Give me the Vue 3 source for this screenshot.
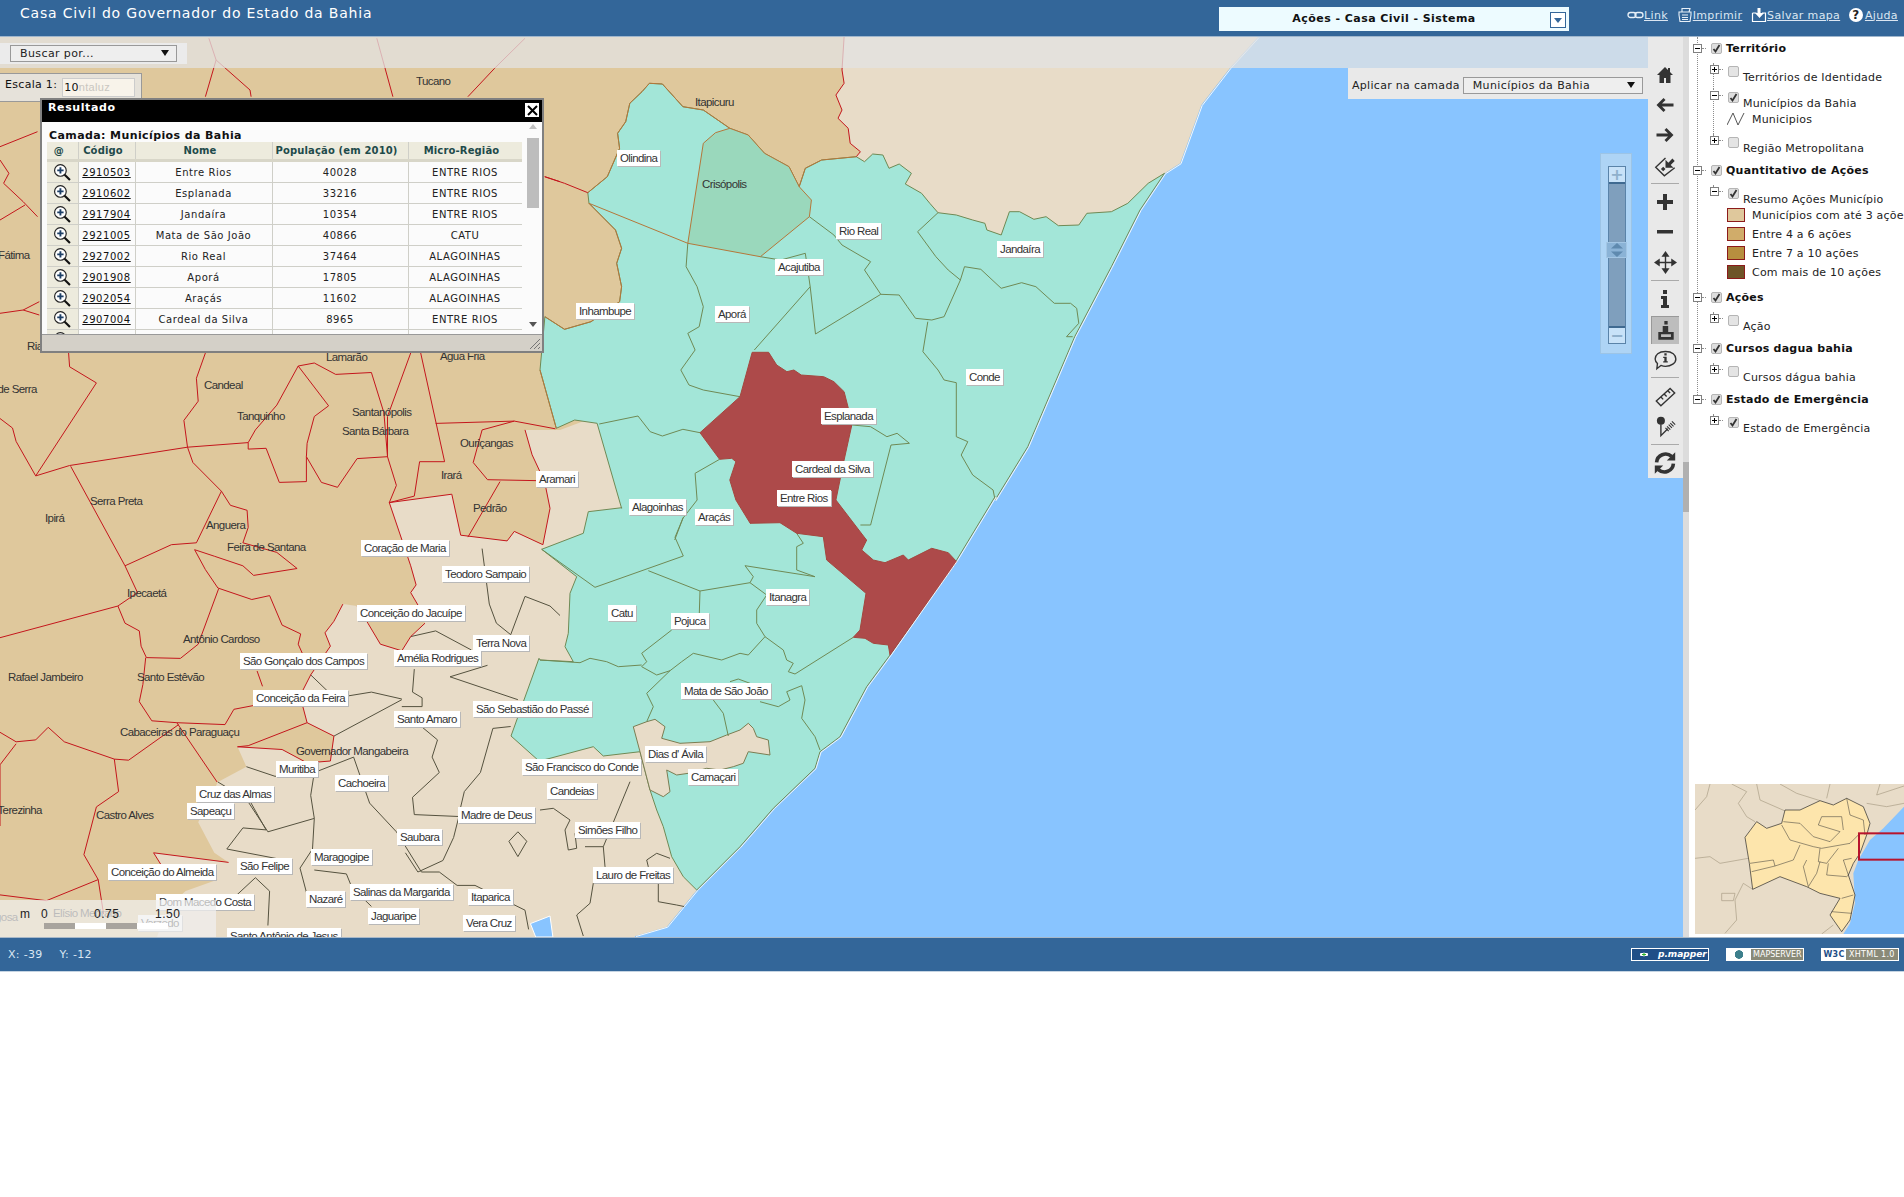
<script setup>
// reference zoom crops -> page coordinates, so the map traces stay readable
const toPts = (args, fx, fy) => {
  let out = ''
  for (let i = 0; i < args.length; i += 2) {
    out += `${fx(args[i]).toFixed(1)},${fy(args[i + 1]).toFixed(1)} `
  }
  return out
}
const z6 = (...a) => toPts(a, (x) => 540 + x / 2.45, (y) => 60 + y / 3)
const z7 = (...a) => toPts(a, (x) => 540 + x / 3, (y) => 480 + y / 3)
const z8 = (...a) => toPts(a, (x) => x / 2.8, (y) => 340 + y / 2.613)
const z1 = (...a) => toPts(a, (x) => x / 2.8, (y) => y / 3)

const coastNorth = z6(1759, -69, 1690, 24, 1620, 135, 1568, 310, 1530, 340)
const coastMid = z6(1470, 450, 1400, 620, 1310, 830, 1195, 1160, 1115, 1320)
const coastSouth = z7(1365, 50, 1250, 240, 1050, 525, 980, 620, 900, 770, 840, 815, 825, 865, 700, 985, 600, 1100, 470, 1230)
const coastEnd = z7(380, 1340, 285, 1368)

const land = `0,37 ${coastNorth}${coastMid}${coastSouth}${coastEnd}635,937 0,937`
const coastLine = coastNorth + coastMid + coastSouth + coastEnd

const beigeNorth = z6(745, -69) + coastNorth + z6(
  1490, 370, 1440, 430, 1400, 455, 1340, 460, 1320, 495, 1270, 497, 1240, 470, 1210, 478, 1175, 455, 1150, 455,
  1130, 525, 1095, 510, 1090, 490, 1060, 480, 1020, 465, 975, 458, 955, 430, 935, 400, 895, 372, 910, 340,
  880, 312, 855, 325, 840, 285, 815, 282, 795, 305, 775, 290, 785, 275, 760, 250, 755, 205, 730, 175,
  740, 150, 725, 105, 745, 70, 740, 30,
)

const beigeSouth = z8(1090, 425, 1265, 403, 1290, 510, 1420, 525, 1440, 500, 1520, 535, 1540, 440, 1525, 370, 1490, 300, 1470, 235, 1568, 235)
  + '600,415 640,430 ' + z7(470, 1230, 380, 1340, 285, 1368) + '635,937 157,937 '
  + z8(470, 1480, 520, 1440, 610, 1410, 460, 1385, 430, 1340, 640, 1365, 600, 1340, 555, 1260, 610, 1155, 690, 1115, 665, 1063,
    790, 1070, 860, 1105, 925, 1100, 935, 1035, 860, 1000, 840, 930, 870, 875, 925, 800, 910, 765, 935, 735, 960, 690, 1000, 695,
    1030, 740, 1065, 795, 1125, 812, 1150, 775, 1190, 740, 1175, 700, 1150, 660, 1165, 640, 1150, 590)

const green = z6(
  268, 70, 300, 72, 350, 140, 400, 150, 465, 205, 510, 225, 550, 280, 610, 320, 635, 380, 650, 325, 690, 300, 775, 290,
  795, 305, 815, 282, 840, 285, 855, 325, 880, 312, 910, 340, 895, 372, 935, 400, 955, 430, 975, 458, 1020, 465, 1060, 480,
  1090, 490, 1095, 510, 1130, 525, 1150, 455, 1175, 455, 1210, 478, 1240, 470, 1270, 497, 1320, 495, 1340, 460, 1400, 455,
  1440, 430, 1490, 370, 1530, 340,
) + coastMid + coastSouth + z7(
  430, 1190, 395, 1130, 370, 1040, 350, 990, 330, 930, 300, 815, 190, 828, 160, 800, 30, 835, -3, 843, -87, 768, -3, 535, 0, 540,
  100, 545, 75, 500, 85, 460, 90, 340, 110, 290, 5, 208, 130, 160, 145, 95, 245, 83,
) + z6(
  200, 1345, 140, 1090, 85, 1080, 40, 1105, 0, 930, 12, 770, 60, 808, 125, 785, 195, 725, 200, 680, 188, 610, 200, 565,
  185, 510, 120, 430, 117, 398, 165, 350, 195, 265, 190, 220, 210, 185, 220, 130, 250, 95,
)

const bulge = z7(320, 725, 345, 718, 375, 740, 365, 775, 420, 790, 510, 785, 560, 765, 600, 750, 625, 730, 640, 745, 650, 770,
  685, 780, 690, 825, 625, 815, 610, 850, 580, 860, 540, 870, 500, 865, 445, 880, 410, 885, 380, 870, 390, 935, 370, 950,
  330, 930, 300, 815, 280, 740)

const crisopolis = z6(465, 205, 510, 225, 550, 280, 610, 320, 635, 380, 665, 420, 660, 470, 540, 590, 362, 550, 400, 250, 430, 218)

const selected = z6(520, 877, 560, 877, 580, 915, 605, 935, 622, 930, 640, 945, 695, 950, 720, 965, 745, 995, 765, 1090, 745, 1200, 725, 1320, 800, 1440)
  + z7(980, 180, 965, 210, 1000, 240, 1035, 248, 1090, 225, 1105, 240, 1175, 205, 1225, 218, 1250, 245, 1050, 525, 1045, 495,
    1000, 490, 975, 475, 940, 472, 960, 450, 978, 340, 860, 240, 850, 170, 770, 160, 720, 128, 630, 130)
  + z6(515, 1390, 480, 1320, 465, 1260, 480, 1205, 470, 1195, 440, 1198, 392, 1118, 490, 1010)

const lake = z8(1485, 1525, 1540, 1505, 1548, 1560, 1500, 1560)

const redLines = [
  z6(745, -69, 740, 30, 745, 70, 725, 105, 740, 150, 730, 175, 755, 205, 760, 250, 785, 275, 775, 290),
  z6(12, 350, 60, 370, 117, 398),
  z1(585, 115, 605, 180, 575, 290),
  z1(605, 180, 700, 270, 703, 290),
  z1(1055, 115, 1100, 290),
  z1(1470, 115, 1385, 205, 1310, 290),
  z1(0, 440, 105, 395),
  z1(0, 480, 25, 520, 10, 550, 65, 605, 105, 650),
  z1(0, 660, 70, 615),
  z1(110, 905, 65, 930, 0, 940),
  z1(65, 930, 110, 945),
  z1(1525, 530, 1568, 545),
  z8(192, 34, 195, 70, 270, 112, 100, 355, 45, 265, 35, 230, 0, 205),
  z8(100, 355, 195, 328, 525, 280, 695, 268, 695, 285, 745, 283, 782, 372, 858, 370, 858, 305, 900, 372, 945, 385, 1000, 310, 1085, 305, 1075, 190, 1040, 85, 940, 90, 880, 60, 835, 68, 775, 170, 715, 235, 695, 268),
  z8(835, 68, 920, 172, 880, 200, 860, 270, 858, 305),
  z8(1150, 34, 1085, 200, 1085, 305, 1110, 380, 1090, 425, 1160, 408, 1175, 318, 1245, 318, 1178, 34),
  z8(1220, 218, 1440, 212, 1555, 232),
  z8(1440, 212, 1350, 235, 1325, 320, 1365, 365, 1525, 368),
  z8(1400, 370, 1310, 515),
  z8(1090, 425, 1265, 403, 1290, 510, 1420, 525, 1440, 500, 1520, 535, 1540, 440, 1525, 370, 1490, 300, 1470, 235),
  z8(575, 34, 550, 100, 555, 160, 515, 210, 525, 280, 540, 320, 620, 395, 550, 530, 480, 535, 350, 590, 198, 330),
  z8(620, 395, 645, 432, 692, 445, 695, 490, 680, 530, 775, 555, 832, 597, 710, 615, 680, 590, 600, 565, 545, 548, 575, 600, 610, 648, 705, 678, 755, 668, 790, 745, 842, 768, 835, 795, 848, 822),
  z8(350, 590, 385, 660, 330, 695, 0, 778),
  z8(330, 695, 350, 740, 390, 760, 395, 800, 410, 830, 505, 832, 555, 795, 612, 650),
  z8(408, 830, 400, 900, 390, 945, 425, 995, 495, 1000, 630, 1005, 655, 965, 710, 955),
  z8(495, 1000, 608, 1155),
  z8(720, 865, 735, 905),
  z8(500, 1005, 360, 1098, 320, 1095, 180, 1050, 135, 1012, 100, 1045, 45, 1050, 0, 1025),
  z8(320, 1095, 332, 1180, 270, 1220, 235, 1345, 275, 1410, 130, 1465, 0, 1450),
  z8(45, 1055, 0, 1110, 0, 1270),
  z8(275, 1410, 290, 1500),
  z8(1090, 425, 1150, 590, 1165, 640, 1150, 660, 1175, 700),
  z8(960, 690, 935, 735, 910, 765, 925, 800, 870, 875, 840, 930, 860, 1000, 695, 1060, 665, 1063, 790, 1070, 860, 1105, 925, 1100, 935, 1035, 860, 1000),
  z8(1000, 695, 1030, 740, 1065, 795, 1125, 812, 1150, 775, 1190, 740),
  z8(430, 1340, 640, 1365),
  z8(430, 1340, 460, 1385),
]

const oliveLines = [
  z6(358, 620, 385, 680, 400, 740, 390, 800, 362, 820, 380, 870, 345, 930, 365, 975, 400, 990, 490, 1010),
  z6(362, 550, 358, 620),
  z6(540, 590, 590, 600, 650, 580, 655, 620, 662, 680, 525, 870),
  z6(662, 680, 675, 822, 835, 703, 880, 705, 900, 740, 920, 775, 960, 780, 990, 770, 1030, 660, 1000, 630, 970, 590, 925, 515, 975, 458),
  z6(660, 470, 720, 525, 740, 555, 810, 605, 795, 630, 835, 703),
  z6(1030, 660, 1040, 620, 1080, 628, 1130, 685, 1180, 668, 1215, 680, 1260, 730, 1300, 730, 1315, 745, 1320, 790, 1290, 830, 1305, 830),
  z6(950, 785, 938, 875, 975, 930, 990, 960, 1020, 968, 1020, 1130, 1048, 1145, 1032, 1185, 1060, 1245, 1110, 1290, 1115, 1320),
  z6(392, 1118, 350, 1108, 300, 1128, 270, 1115, 240, 1068, 145, 1092),
  z6(765, 1095, 810, 1100, 850, 1130, 875, 1120, 905, 1150, 860, 1155, 810, 1395, 785, 1395),
  z6(440, 1198, 380, 1240, 385, 1320, 350, 1375, 330, 1440),
  z7(5, 208, 165, 322, 430, 228, 405, 172, 430, 112),
  z7(325, 272, 480, 333, 630, 308, 640, 290, 615, 257, 825, 290, 770, 270, 770, 200, 790, 190, 770, 160),
  z7(480, 333, 478, 400),
  z7(395, 450, 305, 520, 320, 545, 305, 560, 350, 585, 390, 572, 320, 640, 340, 680, 320, 725),
  z7(630, 308, 680, 345, 650, 390, 650, 430, 675, 470, 625, 525, 600, 520, 545, 540, 460, 520, 425, 545, 390, 572),
  z7(675, 470, 730, 510, 740, 540, 760, 550, 745, 575, 765, 582, 940, 472),
  z7(520, 660, 550, 700, 565, 768),
  z7(570, 605, 595, 597, 630, 610),
  z7(660, 665, 715, 680, 750, 660, 740, 635, 785, 617, 795, 660, 785, 715, 825, 770, 840, 810),
  z7(0, 540, 120, 548, 150, 535, 200, 545, 235, 560, 305, 555),
]

const orangeLines = [
  z6(268, 70, 300, 72, 350, 140, 400, 150, 465, 205, 510, 225, 550, 280, 610, 320, 635, 380, 650, 325, 690, 300, 775, 290),
  z6(117, 398, 165, 350, 195, 265, 190, 220, 210, 185, 220, 130, 250, 95, 268, 70),
  z6(120, 430, 185, 510, 200, 565, 188, 610, 200, 680, 195, 725, 125, 785, 60, 808, 12, 770),
  z6(120, 430, 362, 550, 540, 590, 660, 470, 665, 420, 635, 380),
  z6(465, 205, 430, 218, 400, 250, 362, 550),
  z6(0, 930, 40, 1105),
]

const darkLines = [
  z8(1350, 545, 1370, 690, 1390, 740, 1430, 770, 1470, 670, 1540, 695, 1568, 720),
  z8(1150, 775, 1220, 760, 1320, 810),
  z8(1365, 850, 1260, 880, 1450, 940),
  z8(1160, 860, 1155, 920, 1182, 935, 1182, 958, 1125, 958),
  z8(935, 1035, 1125, 940),
  z8(870, 875, 920, 920, 975, 930, 1040, 920, 1125, 938),
  z8(1180, 1010, 1225, 1045, 1210, 1090, 1230, 1130, 1155, 1195, 1160, 1240, 1285, 1245, 1270, 1300, 1240, 1360, 1170, 1390, 1135, 1340),
  z8(1285, 1240, 1300, 1180, 1345, 1130, 1380, 1015, 1430, 1010),
  z8(690, 1115, 770, 1140, 880, 1130, 990, 1090, 1035, 1210, 1110, 1285, 1180, 1390),
  z8(880, 1130, 870, 1190, 880, 1250, 750, 1285, 690, 1200),
  z8(610, 1155, 700, 1205, 745, 1280, 680, 1275, 635, 1330, 775, 1355),
  z8(880, 1250, 875, 1330, 840, 1380, 860, 1450),
  z8(880, 1385, 970, 1395, 985, 1430, 1040, 1480),
  z8(715, 1405, 640, 1470),
  z8(715, 1405, 755, 1440, 750, 1530),
  z8(1425, 1310, 1450, 1285, 1475, 1310, 1450, 1350, 1425, 1310),
  z8(1180, 1390, 1230, 1390, 1280, 1425, 1330, 1425, 1470, 1490, 1480, 1540),
  z7(0, 990, 40, 985, 90, 1020, 75, 1050, 85, 1110, 110, 1105, 105, 1060),
  z7(135, 1100, 190, 1100, 195, 1160, 160, 1210, 150, 1270, 110, 1305, 130, 1368),
  z7(270, 905, 190, 1100),
  z7(320, 1140, 350, 1120, 390, 1135),
  z7(320, 1140, 325, 1160, 355, 1200, 355, 1265, 410, 1275, 435, 1280),
]

const boxed = [
  ['Olindina', 617, 158], ['Rio Real', 836, 231], ['Jandaíra', 997, 249], ['Acajutiba', 775, 267],
  ['Inhambupe', 576, 311], ['Aporá', 715, 314], ['Conde', 966, 377], ['Esplanada', 821, 416],
  ['Cardeal da Silva', 792, 469], ['Entre Rios', 777, 498], ['Alagoinhas', 629, 507], ['Araçás', 695, 517],
  ['Aramari', 536, 479], ['Itanagra', 766, 597], ['Catu', 608, 613], ['Pojuca', 671, 621],
  ['Mata de São João', 681, 691], ['São Sebastião do Passé', 473, 709], ["Dias d' Ávila", 645, 754],
  ['São Francisco do Conde', 522, 767], ['Camaçari', 688, 777], ['Candeias', 547, 791], ['Simões Filho', 575, 830],
  ['Lauro de Freitas', 593, 875], ['Coração de Maria', 361, 548], ['Teodoro Sampaio', 442, 574],
  ['Conceição do Jacuípe', 357, 613], ['Terra Nova', 473, 643], ['Amélia Rodrigues', 394, 658],
  ['São Gonçalo dos Campos', 240, 661], ['Conceição da Feira', 253, 698], ['Santo Amaro', 394, 719],
  ['Muritiba', 276, 769], ['Cachoeira', 335, 783], ['Cruz das Almas', 196, 794], ['Sapeaçu', 187, 811],
  ['Madre de Deus', 458, 815], ['Saubara', 397, 837], ['Maragogipe', 311, 857], ['Conceição do Almeida', 108, 872],
  ['São Felipe', 237, 866], ['Salinas da Margarida', 350, 892], ['Nazaré', 306, 899], ['Itaparica', 468, 897],
  ['Jaguaripe', 368, 916], ['Dom Macedo Costa', 156, 902], ['Vera Cruz', 463, 923], ['Varzedo', 138, 923],
  ['Santo Antônio de Jesus', 227, 936],
]

const plain = [
  ['Tucano', 416, 81], ['Itapicuru', 695, 102], ['Crisópolis', 702, 184], ['Riachão do Jacuípe', 27, 346],
  ['Fátima', -2, 255], ['Lamarão', 326, 357], ['Água Fria', 440, 356], ['Candeal', 204, 385], ['Pé de Serra', -18, 389],
  ['Tanquinho', 237, 416], ['Santanópolis', 352, 412], ['Santa Bárbara', 342, 431], ['Ouriçangas', 460, 443],
  ['Irará', 441, 475], ['Pedrão', 473, 508], ['Serra Preta', 90, 501], ['Ipirá', 45, 518], ['Anguera', 206, 525],
  ['Feira de Santana', 227, 547], ['Ipecaetá', 127, 593], ['Antônio Cardoso', 183, 639], ['Rafael Jambeiro', 8, 677],
  ['Santo Estêvão', 137, 677], ['Cabaceiras do Paraguaçu', 120, 732], ['Governador Mangabeira', 296, 751],
  ['Santa Terezinha', -32, 810], ['Castro Alves', 96, 815], ['Elísio Medrado', 53, 913], ['Amargosa', -30, 917],
]

const labelStyle = (l) => ({ left: `${l[1]}px`, top: `${l[2] - 37 - 8}px` })

const tools = [
  { size: 20, fill: 'M10 2 2 10h2.5v8H9v-5h2v5h4.500v-8H18l-3-3V3h-2v2z' },
  { size: 20, fill: 'M8.500 3 1.500 10l7 7 2-2L7 11.500h11.500v-3H7L10.500 5z' },
  { size: 20, fill: 'M11.500 3 18.500 10l-7 7-2-2 3.500-3.500H1.500v-3H13L9.500 5z' },
  { size: 23, fill: 'M10 12V5l2.500 2.500L16 4l2 2-3.500 3.500L17 12zM6 13l2-2 2 2-2 2z', line: 'M10 3.500 1.500 11.500 9 19 18 12' },
  { sep: true },
  { size: 20, fill: 'M8 2h4v6h6v4h-6v6H8v-6H2V8h6z' },
  { size: 20, fill: 'M2 8h16v3.500H2z' },
  { size: 23, fill: 'M10 0l3.500 5h-7zM10 20l-3.500-5h7zM0 10l5-3.500v7zM20 10l-5 3.500v-7z', line: 'M10 4v12M4 10h12' },
  { sep: true },
  { size: 20, fill: 'M8 1h4v4H8zM6 7h6v9h2v3H6v-3h2v-6H6z' },
  { size: 22, fill: 'M8.500 1h3v3h-3zM7 5.500h5V11H7z M3 11h14v7H3zM5.500 13v2.500h9V13z', active: true },
  { size: 23, fill: 'M9 4.500h2v2H9zM8 7.500h3v4h1v1.200H8v-1.200h1V8.700H8z', line: 'M10 3c6 0 9 3 9 6.500S15 16 10 16c-1.500 0-3-.4-4-.8L2.500 18 3 13.500C1.800 12.300 1 11 1 9.500 1 6 4 3 10 3z' },
  { sep: true },
  { size: 23, line: 'M2 14 14 3l4 4L6 18zM6 10.500l2 2M9 8l2 2M12 5l2 2' },
  { size: 23, fill: 'M6 1.500a3.500 3.500 0 1 1 0 7 3.500 3.500 0 0 1 0-7z', line: 'M6 8v10L12 12', hatch: 'M11 13l7-7' },
  { sep: true },
  { size: 24, fill: 'M18.500 1v7h-7zM1.500 19v-7h7z', thick: 'M3 9.500A7.500 7.500 0 0 1 15.500 4.500M17 10.500A7.500 7.500 0 0 1 4.500 15.500' },
]

const rows = [
  ['2910503', 'Entre Rios', '40028', 'ENTRE RIOS'],
  ['2910602', 'Esplanada', '33216', 'ENTRE RIOS'],
  ['2917904', 'Jandaíra', '10354', 'ENTRE RIOS'],
  ['2921005', 'Mata de São João', '40866', 'CATU'],
  ['2927002', 'Rio Real', '37464', 'ALAGOINHAS'],
  ['2901908', 'Aporá', '17805', 'ALAGOINHAS'],
  ['2902054', 'Araçás', '11602', 'ALAGOINHAS'],
  ['2907004', 'Cardeal da Silva', '8965', 'ENTRE RIOS'],
  ['', '', '', ''],
]

const tree = [
  {
    title: 'Território',
    subs: [
      { label: 'Territórios de Identidade', plus: true, checked: false },
      { label: 'Municípios da Bahia', plus: false, checked: true, legend: [{ line: true, text: 'Municipios' }] },
      { label: 'Região Metropolitana', plus: true, checked: false },
    ],
  },
  {
    title: 'Quantitativo de Ações',
    subs: [
      {
        label: 'Resumo Ações Município',
        plus: false,
        checked: true,
        legend: [
          { color: '#dfc89c', text: 'Municípios com até 3 ações' },
          { color: '#d0ac6a', text: 'Entre 4 a 6 ações' },
          { color: '#b78f3f', text: 'Entre 7 a 10 ações' },
          { color: '#6e5427', text: 'Com mais de 10 ações' },
        ],
      },
    ],
  },
  { title: 'Ações', subs: [{ label: 'Ação', plus: true, checked: false }] },
  { title: 'Cursos dagua bahia', subs: [{ label: 'Cursos dágua bahia', plus: true, checked: false }] },
  { title: 'Estado de Emergência', subs: [{ label: 'Estado de Emergência', plus: true, checked: true }] },
]

const overviewLines = [
  '550,185 600,190 640,230 690,245 720,215 655,195 665,170 725,170 730,210',
  '545,195 570,240 640,260 665,265 750,250 775,225',
  '455,335 525,318 580,300 600,255',
  '450,310 520,300 525,318',
  '660,265 655,305 680,310 715,265',
  '620,300 610,320 625,380 650,340 660,305',
  '685,310 680,345 740,350 745,345 730,300 755,295',
  '740,115 750,165 790,180 795,225',
  '725,415 760,405',
  '695,455 755,460',
]
const overviewLand = [
  '285,150 320,110 330,72',
  '395,72 440,95 415,130 440,170 465,185',
  '285,295 330,290 360,310 445,295',
  '365,400 405,400 400,422 365,422 365,400',
  '405,420 410,480 375,520',
  '405,420 430,370 458,388',
  '470,72 480,120 560,155',
  '540,72 590,100 660,122',
  '690,72 680,115',
  '800,130 860,140 912,130',
  '840,72 830,105 912,78',
  '665,522 700,495',
]
</script>

<template>
  <div class="app">
    <header class="topbar">
      <div class="topbar__title">Casa Civil do Governador do Estado da Bahia</div>
      <div class="system-select">
        <span>Ações - Casa Civil - Sistema</span>
        <i class="system-select__btn"></i>
      </div>
      <nav class="toplinks">
        <a class="toplink">
          <svg width="17" height="14" viewBox="0 0 17 14" fill="none" stroke="#e8f0f8" stroke-width="1.300">
            <rect x="1" y="4.500" width="8" height="5" rx="2.500" />
            <rect x="8" y="4.500" width="8" height="5" rx="2.500" />
          </svg>
          <span>Link</span>
        </a>
        <a class="toplink">
          <svg width="16" height="16" viewBox="0 0 16 16" fill="none" stroke="#e8f0f8" stroke-width="1.100">
            <path d="M5 5V1.500h8L12 5M2 5h12v3l-1 6.500H3L2 8zM5 8h6M5 10.500h6M5 12.500h6" />
          </svg>
          <span>Imprimir</span>
        </a>
        <a class="toplink">
          <svg width="16" height="16" viewBox="0 0 16 16">
            <path d="M1.500 6h4M11 6h3.500v8.500h-13V6" fill="none" stroke="#fff" stroke-width="1.200" />
            <path d="M6.500 1h3v5H13l-4.500 5L4 6h2.500z" fill="#fff" />
          </svg>
          <span>Salvar mapa</span>
        </a>
        <a class="toplink">
          <i class="help-dot">?</i>
          <span>Ajuda</span>
        </a>
      </nav>
    </header>

    <main class="workspace">
      <section class="map">
        <svg class="map__svg" width="1683" height="900" viewBox="0 37 1683 900">
          <rect x="0" y="37" width="1683" height="900" fill="#88c4ff" />
          <polygon :points="land" fill="#dfc89c" />
          <polygon :points="beigeNorth" fill="#e8dcc8" />
          <polygon :points="beigeSouth" fill="#e8dcc8" />
          <polygon :points="green" fill="#a3e6d8" stroke="#6f8a55" stroke-width="1" />
          <polygon :points="bulge" fill="#e8dcc8" stroke="#7b7d52" stroke-width="1" />
          <polygon :points="lake" fill="#88c4ff" stroke="#fff" stroke-width="1" />
          <polygon :points="crisopolis" fill="#9ad8bc" />
          <polyline v-for="(l, i) in darkLines" :key="'d' + i" :points="l" class="line line--dark" />
          <polyline v-for="(l, i) in oliveLines" :key="'o' + i" :points="l" class="line line--olive" />
          <polyline v-for="(l, i) in redLines" :key="'r' + i" :points="l" class="line line--red" />
          <polyline v-for="(l, i) in orangeLines" :key="'a' + i" :points="l" class="line line--orange" />
          <polygon :points="selected" fill="#ad4a4a" stroke="#a4473f" stroke-width="1" />
          <polyline :points="coastLine" class="line line--coast" transform="translate(1 0.5)" />
        </svg>

        <span v-for="l in plain" :key="l[0]" class="maplabel maplabel--plain" :style="labelStyle(l)">{{ l[0] }}</span>
        <span v-for="l in boxed" :key="l[0]" class="maplabel maplabel--box" :style="labelStyle(l)">{{ l[0] }}</span>

        <div class="stripe"></div>

        <div class="searchbar">
          <div class="fake-select fake-select--search">
            <span>Buscar por...</span>
            <i class="caret"></i>
          </div>
        </div>

        <div class="scalebox">
          <span>Escala 1:</span>
          <div class="scalebox__input">10<em>ntaluz</em></div>
        </div>

        <div class="applybar">
          <span>Aplicar na camada</span>
          <div class="fake-select fake-select--layer">
            <span>Municípios da Bahia</span>
            <i class="caret"></i>
          </div>
        </div>

        <div class="zoomslider">
          <div class="zoomslider__track">
            <b class="zoomslider__btn zoomslider__btn--top">+</b>
            <b class="zoomslider__btn zoomslider__btn--bottom">−</b>
          </div>
          <div class="zoomslider__handle">
            <svg width="16" height="14" viewBox="0 0 16 14"><path d="M8 0l6 5.500H2zM8 14 2 8.500h12z" fill="#5f8aaf" /></svg>
          </div>
        </div>

        <aside class="toolbar">
          <template v-for="(t, i) in tools" :key="i">
            <hr v-if="t.sep" class="toolbar__sep" />
            <div v-else class="tool" :class="{ 'tool--active': t.active }">
              <svg :width="t.size" :height="t.size" viewBox="0 0 20 20">
                <path v-if="t.line" :d="t.line" fill="none" stroke="#333" stroke-width="1.200" />
                <path v-if="t.thick" :d="t.thick" fill="none" stroke="#333" stroke-width="3" />
                <path v-if="t.hatch" :d="t.hatch" fill="none" stroke="#333" stroke-width="4" stroke-dasharray="1 1" />
                <path v-if="t.fill" :d="t.fill" fill="#333" fill-rule="evenodd" />
              </svg>
            </div>
          </template>
        </aside>

        <div class="scalebar">
          <div class="scalebar__labels">
            <span class="scalebar__unit">m</span>
            <span class="scalebar__zero">0</span>
            <span class="scalebar__mid">0.75</span>
            <span class="scalebar__end">1.50</span>
          </div>
          <div class="scalebar__bar"><i></i><i></i><i></i><i></i></div>
        </div>

        <div class="result">
          <div class="result__title">
            <span>Resultado</span>
            <button class="result__close">
              <svg width="11" height="11" viewBox="0 0 11 11"><path d="M1 1l9 9M10 1l-9 9" stroke="#000" stroke-width="2" /></svg>
            </button>
          </div>
          <div class="result__body">
            <div class="result__scroll">
              <div class="result__layer">Camada: Municípios da Bahia</div>
              <table class="result__table">
                <colgroup>
                  <col style="width: 31px" />
                  <col style="width: 57px" />
                  <col style="width: 137px" />
                  <col style="width: 136px" />
                  <col style="width: 114px" />
                </colgroup>
                <thead>
                  <tr>
                    <th>@</th>
                    <th>Código</th>
                    <th>Nome</th>
                    <th>População (em 2010)</th>
                    <th>Micro-Região</th>
                  </tr>
                </thead>
                <tbody>
                  <tr v-for="(r, i) in rows" :key="i">
                    <td class="cell-zoom">
                      <svg width="18" height="18" viewBox="0 0 17 17">
                        <circle cx="7" cy="7" r="5.500" fill="#fff" stroke="#222" stroke-width="1.100" />
                        <path d="M7 4v6M4 7h6" stroke="#1d3f66" stroke-width="1.800" />
                        <path d="M11 11l5 5" stroke="#111" stroke-width="2" />
                      </svg>
                    </td>
                    <td><a class="code-link">{{ r[0] }}</a></td>
                    <td>{{ r[1] }}</td>
                    <td>{{ r[2] }}</td>
                    <td>{{ r[3] }}</td>
                  </tr>
                </tbody>
              </table>
            </div>
            <div class="result__scrollbar">
              <i class="arrow arrow--up"></i>
              <div class="result__thumb"></div>
              <i class="arrow arrow--down"></i>
            </div>
          </div>
          <div class="result__foot">
            <svg width="12" height="12" viewBox="0 0 12 12"><path d="M11 1 1 11M11 5 5 11M11 9 9 11" stroke="#777" stroke-width="1" /></svg>
          </div>
        </div>
      </section>

      <div class="splitter"><i class="splitter__thumb"></i></div>

      <aside class="side">
        <div class="tree">
          <div v-for="g in tree" :key="g.title" class="group">
            <div class="group__head">
              <i class="exp exp--big"></i>
              <i class="tail"></i>
              <i class="cb cb--on">
                <svg width="9" height="9" viewBox="0 0 9 9"><path d="M1.500 5 3.500 7.500 7.500 1" fill="none" stroke="#333" stroke-width="1.800" /></svg>
              </i>
              <span class="group__title">{{ g.title }}</span>
            </div>
            <div v-for="s in g.subs" :key="s.label" class="sub">
              <div class="sub__row">
                <i class="exp" :class="{ 'exp--plus': s.plus }"></i>
                <i class="tail"></i>
                <i class="cb cb--low" :class="{ 'cb--on': s.checked }">
                  <svg v-if="s.checked" width="9" height="9" viewBox="0 0 9 9"><path d="M1.500 5 3.500 7.500 7.500 1" fill="none" stroke="#333" stroke-width="1.800" /></svg>
                </i>
                <span class="sub__label">{{ s.label }}</span>
              </div>
              <div v-if="s.legend" class="legend">
                <div v-for="l in s.legend" :key="l.text" class="legend__row">
                  <svg v-if="l.line" class="legend__icon" width="18" height="14" viewBox="0 0 18 14">
                    <path d="M0 13 6 1l5 12 6-12" fill="none" stroke="#555" stroke-width="1" />
                  </svg>
                  <i v-else class="legend__swatch" :style="{ background: l.color }"></i>
                  <span>{{ l.text }}</span>
                </div>
              </div>
            </div>
          </div>
        </div>

        <div class="overview">
          <svg width="209" height="150" viewBox="285 72 627 450">
            <rect x="285" y="72" width="627" height="450" fill="#e8dcc8" />
            <polygon points="912,140 850,205 810,240 775,300 760,340 765,430 750,490 730,522 912,522" fill="#88c4ff" />
            <polyline v-for="(l, i) in overviewLand" :key="'l' + i" :points="l" fill="none" stroke="#a89c84" stroke-width="2" />
            <polygon
              points="435,232 450,212 470,185 500,205 545,190 555,150 600,150 660,122 700,135 740,115 790,140 810,190 800,225 780,280 760,310 745,345 765,405 750,480 725,515 690,465 720,415 660,400 620,380 540,350 458,388 448,310"
              fill="#fde5ac"
              stroke="#222"
              stroke-width="2"
            />
            <polyline v-for="(l, i) in overviewLines" :key="'o' + i" :points="l" fill="none" stroke="#333" stroke-width="1.500" />
            <rect x="777" y="220" width="150" height="79" fill="none" stroke="#b8142c" stroke-width="6" />
          </svg>
        </div>
      </aside>
    </main>

    <footer class="statusbar">
      <div class="coords">
        <span>X: -39</span>
        <span>Y: -12</span>
      </div>
      <div class="badges">
        <div class="badge badge--pmapper"><i></i><span>p.mapper</span></div>
        <div class="badge badge--ms"><i></i><span>MAPSERVER</span></div>
        <div class="badge badge--w3c"><b>W3C</b><span>XHTML 1.0</span></div>
      </div>
    </footer>
  </div>
</template>

<style>
body {
  margin: 0;
  background: #fff;
}
</style>

<style scoped>
.app {
  width: 1904px;
  height: 1197px;
  font-family: "DejaVu Sans", sans-serif;
  font-size: 11px;
  color: #111;
  overflow: hidden;
}

.topbar {
  height: 37px;
  box-sizing: border-box;
  display: flex;
  align-items: flex-start;
  background: #336699;
  border-bottom: 1px solid #9fb6cd;
}

.topbar__title {
  flex: 1;
  padding: 4px 0 0 20px;
  color: #fff;
  font-size: 14px;
  line-height: 18px;
  letter-spacing: 0.82px;
}

.system-select {
  position: relative;
  width: 350px;
  height: 24px;
  box-sizing: border-box;
  padding-right: 20px;
  margin-top: 7px;
  margin-right: 58px;
  background: #edfbff;
  font-weight: bold;
  font-size: 11px;
  line-height: 24px;
  text-align: center;
  letter-spacing: 0.45px;
}

.system-select__btn {
  position: absolute;
  right: 3px;
  top: 5px;
  width: 14px;
  height: 14px;
  border: 1px solid #336699;
  background: #fff;
}

.system-select__btn::after {
  content: "";
  position: absolute;
  left: 3px;
  top: 5px;
  border: 4px solid transparent;
  border-top: 5px solid #336699;
}

.toplinks {
  width: 277px;
  box-sizing: border-box;
  display: flex;
  justify-content: space-between;
  padding: 7px 6px 0 0;
}

.toplink {
  display: flex;
  align-items: center;
  height: 16px;
  color: #dbe6f2;
  font-size: 11px;
  letter-spacing: 0.35px;
}

.toplink span {
  text-decoration: underline;
}

.help-dot {
  width: 14px;
  height: 14px;
  margin-right: 2px;
  border-radius: 50%;
  background: #fff;
  color: #222;
  font-style: normal;
  font-weight: bold;
  font-size: 12px;
  line-height: 14px;
  text-align: center;
}

.workspace {
  display: flex;
  height: 900px;
}

.map {
  position: relative;
  width: 1683px;
  height: 900px;
  overflow: hidden;
  flex: none;
}

.map__svg {
  display: block;
}

.line {
  fill: none;
  stroke-width: 1;
}

.line--red {
  stroke: #c4161c;
}

.line--olive {
  stroke: #6f8a55;
}

.line--orange {
  stroke: #b5773a;
}

.line--dark {
  stroke: #55523f;
}

.line--coast {
  stroke: #f4f8fb;
}

.maplabel {
  position: absolute;
  padding: 1px 3px;
  font-family: "Liberation Sans", sans-serif;
  font-size: 11.5px;
  letter-spacing: -0.6px;
  line-height: 14px;
  color: #333;
  white-space: nowrap;
}

.maplabel--plain {
  padding: 1px 0;
}

.maplabel--box {
  background: #fff;
  box-shadow: 1px 1px 0 #b8b8b8;
}

.stripe {
  position: absolute;
  left: 0;
  top: 0;
  width: 1648px;
  height: 31px;
  background: rgba(226, 226, 226, 0.76);
}

.searchbar {
  position: absolute;
  left: 0;
  top: 6px;
  width: 187px;
  height: 21px;
  box-sizing: border-box;
  padding: 2px 0 0 10px;
  background: #ebebeb;
}

.fake-select {
  position: relative;
  box-sizing: border-box;
  border: 1px solid #999;
  background: #eee;
  color: #222;
  letter-spacing: 0.4px;
}

.fake-select--search {
  width: 167px;
  height: 17px;
  padding-left: 9px;
  line-height: 15px;
}

.fake-select--layer {
  width: 180px;
  height: 17px;
  padding-left: 9px;
  line-height: 15px;
}

.caret {
  position: absolute;
  right: 7px;
  top: 4px;
  border: 4px solid transparent;
  border-top: 6px solid #111;
  border-bottom: 0;
}

.scalebox {
  position: absolute;
  left: 0;
  top: 36px;
  width: 142px;
  height: 29px;
  box-sizing: border-box;
  display: flex;
  gap: 5px;
  padding: 4px 0 0 5px;
  background: #e6e2da;
  border: 1px solid #999;
  border-left: 0;
  letter-spacing: 0.3px;
}

.scalebox__input {
  width: 73px;
  height: 19px;
  box-sizing: border-box;
  border: 1px solid #ccc;
  background: #f8f3ea;
  padding: 2px 0 0 1px;
}

.scalebox__input em {
  font-family: "Liberation Sans", sans-serif;
  font-style: normal;
  color: #c9c6c0;
}

.applybar {
  position: absolute;
  left: 1348px;
  top: 31px;
  width: 300px;
  height: 31px;
  box-sizing: border-box;
  display: flex;
  align-items: center;
  gap: 3px;
  padding: 3px 0 0 4px;
  background: #e9e9e9;
  letter-spacing: 0.3px;
  color: #222;
}

.zoomslider {
  position: absolute;
  left: 1600px;
  top: 116px;
  width: 32px;
  height: 201px;
  box-sizing: border-box;
  border: 1px solid #9cc4e6;
  background: #aed4f5;
}

.zoomslider__track {
  position: absolute;
  left: 7px;
  top: 12px;
  width: 16px;
  height: 176px;
  background: #7f9fbd;
  border: 1px solid #5a83a8;
}

.zoomslider__btn {
  position: absolute;
  left: 0;
  width: 16px;
  height: 15px;
  background: #c8e2f8;
  color: #8fb0cc;
  font-size: 16px;
  line-height: 15px;
  text-align: center;
}

.zoomslider__btn--top {
  top: 0;
  border-bottom: 2px solid #3f6a91;
}

.zoomslider__btn--bottom {
  bottom: 0;
  border-top: 2px solid #3f6a91;
}

.zoomslider__handle {
  position: absolute;
  left: 5px;
  top: 88px;
  width: 21px;
  height: 16px;
  display: flex;
  align-items: center;
  justify-content: center;
  background: #8bb3d6;
  border: 1px solid #a3c6e4;
  box-sizing: border-box;
}

.toolbar {
  position: absolute;
  right: 0;
  top: 0;
  width: 35px;
  height: 441px;
  box-sizing: border-box;
  padding: 23px 1px 0 0;
  background: #e9e9e9;
}

.tool {
  display: flex;
  align-items: center;
  justify-content: center;
  height: 30px;
}

.tool--active {
  width: 28px;
  height: 28px;
  margin: 2px 0 0 3px;
  background: #bdbdbd;
  border-top: 1px solid #999;
  border-left: 1px solid #999;
  box-sizing: border-box;
}

.toolbar__sep {
  height: 1px;
  margin: 3px 3px 3px;
  border: 0;
  background: #aaa;
}

.scalebar {
  position: absolute;
  left: 0;
  bottom: 0;
  width: 216px;
  height: 37px;
  box-sizing: border-box;
  padding-top: 7px;
  background: rgba(240, 240, 240, 0.72);
  color: #222;
  font-family: "Liberation Sans", sans-serif;
  font-size: 12px;
}

.scalebar__labels {
  display: flex;
  line-height: 14px;
  letter-spacing: 0.5px;
}

.scalebar__unit {
  margin-left: 20px;
  width: 21px;
}

.scalebar__zero {
  width: 53px;
}

.scalebar__mid {
  width: 61px;
}

.scalebar__bar {
  display: flex;
  margin: 2px 0 0 44px;
  height: 6px;
}

.scalebar__bar i {
  width: 31px;
  background: #a8a49e;
}

.scalebar__bar i:nth-child(even) {
  background: #fff;
}

.result {
  position: absolute;
  left: 40px;
  top: 61px;
  width: 504px;
  height: 255px;
  box-sizing: border-box;
  display: flex;
  flex-direction: column;
  border: 2px solid #808080;
  background: #fbfbfb;
}

.result__title {
  position: relative;
  flex: none;
  height: 22px;
  padding: 1px 0 0 6px;
  box-sizing: border-box;
  background: #000;
  color: #fff;
  font-weight: bold;
  line-height: 14px;
  letter-spacing: 0.6px;
}

.result__close {
  position: absolute;
  right: 3px;
  top: 3px;
  width: 14px;
  height: 14px;
  padding: 0;
  display: flex;
  align-items: center;
  justify-content: center;
  border: 1px solid #000;
  outline: 1px solid #fff;
  outline-offset: -1px;
  background: #fff;
}

.result__body {
  flex: 1;
  min-height: 0;
  display: flex;
}

.result__scroll {
  flex: 1;
  min-width: 0;
  overflow: hidden;
  padding: 7px 0 0 5px;
}

.result__layer {
  height: 13px;
  padding-left: 2px;
  font-weight: bold;
  line-height: 13px;
  letter-spacing: 0.4px;
}

.result__table {
  width: 475px;
  table-layout: fixed;
  border-collapse: collapse;
  font-size: 10px;
  letter-spacing: 0.55px;
  color: #222;
}

.result__table th {
  height: 17px;
  padding: 0 7px 0 0;
  background: #edebdd;
  border-right: 1px solid #cfcfc8;
  border-bottom: 3px solid #d8d6c8;
  color: #1e4a4a;
  letter-spacing: 0.15px;
  white-space: nowrap;
}

.result__table td {
  height: 20px;
  padding: 0;
  text-align: center;
  border-right: 1px solid #cfcfc8;
  border-bottom: 1px solid #cfcfc8;
}

.result__table .cell-zoom {
  background: #edebdd;
  line-height: 0;
}

.code-link {
  color: #111;
  text-decoration: underline;
}

.result__scrollbar {
  position: relative;
  flex: none;
  width: 20px;
}

.result__thumb {
  position: absolute;
  left: 5px;
  top: 16px;
  width: 12px;
  height: 70px;
  background: #bdbdbd;
}

.arrow {
  position: absolute;
  left: 7px;
  border: 4px solid transparent;
}

.arrow--up {
  top: 2px;
  border-bottom: 5px solid #c0c0c0;
  border-top: 0;
}

.arrow--down {
  bottom: 7px;
  border-top: 5px solid #555;
  border-bottom: 0;
}

.result__foot {
  flex: none;
  height: 17px;
  display: flex;
  justify-content: flex-end;
  align-items: flex-end;
  padding: 0 1px 1px 0;
  box-sizing: border-box;
  background: #d4d0c8;
  border-top: 1px solid #999;
}

.splitter {
  position: relative;
  flex: none;
  width: 6px;
  background: #dcdcdc;
}

.splitter__thumb {
  position: absolute;
  left: 0;
  top: 425px;
  width: 6px;
  height: 50px;
  background: #b0b0b0;
}

.side {
  flex: none;
  width: 215px;
  display: flex;
  flex-direction: column;
  justify-content: space-between;
  overflow: hidden;
  background: #fff;
}

.tree {
  position: relative;
  width: 215px;
}

.tree::before {
  content: "";
  position: absolute;
  left: 8px;
  top: 0;
  height: 360px;
  border-left: 1px dotted #8d8d8d;
}

.group {
  margin-bottom: 3px;
}

.group__head {
  display: flex;
  align-items: center;
  height: 22px;
  padding-left: 4px;
}

.group__title {
  margin-left: 4px;
  font-weight: bold;
  letter-spacing: 0.25px;
  white-space: nowrap;
}

.exp {
  position: relative;
  flex: none;
  width: 9px;
  height: 9px;
  box-sizing: border-box;
  border: 1px solid #808080;
  background: #fff;
  z-index: 1;
}

.exp::before {
  content: "";
  position: absolute;
  left: 1px;
  top: 3px;
  width: 5px;
  height: 1px;
  background: #000;
}

.exp--plus::after {
  content: "";
  position: absolute;
  left: 3px;
  top: 1px;
  width: 1px;
  height: 5px;
  background: #000;
}

.tail {
  flex: none;
  width: 4px;
  margin: 0 5px 0 0;
  border-top: 1px dotted #8d8d8d;
}

.cb {
  flex: none;
  width: 11px;
  height: 11px;
  box-sizing: border-box;
  display: flex;
  align-items: center;
  justify-content: center;
  border: 1px solid #b5b5b5;
  border-radius: 2px;
  background: #e4e4e4;
}

.cb--on {
  background: #dedede;
}

.sub {
  position: relative;
  margin-top: 4px;
}

.sub::before {
  content: "";
  position: absolute;
  left: 24px;
  top: 0;
  height: 6px;
  border-left: 1px dotted #8d8d8d;
}

.sub:not(:last-child)::before {
  height: auto;
  bottom: -4px;
}

.sub__row {
  display: flex;
  align-items: flex-start;
  height: 22px;
  padding-left: 21px;
}

.sub__row .exp {
  margin-top: 2px;
}

.sub__row .tail {
  margin-top: 6px;
}

.cb--low {
  margin-top: 3px;
}

.sub__label {
  margin-left: 4px;
  padding-top: 8px;
  line-height: 14px;
  white-space: nowrap;
  letter-spacing: 0.2px;
  color: #222;
}

.legend {
  margin-top: -1.5px;
  padding-bottom: 1.5px;
}

.legend__row {
  display: flex;
  align-items: center;
  gap: 7px;
  height: 19px;
  padding-left: 38px;
  white-space: nowrap;
  letter-spacing: 0.2px;
  color: #222;
}

.legend__icon {
  flex: none;
}

.legend__swatch {
  flex: none;
  width: 18px;
  height: 14px;
  box-sizing: border-box;
  border: 1px solid #8c1a1a;
}

.overview {
  flex: none;
  height: 150px;
  margin: 0 0 3px 6px;
  line-height: 0;
}

.statusbar {
  height: 35px;
  box-sizing: border-box;
  display: flex;
  align-items: center;
  justify-content: space-between;
  padding: 0 5px 1px 8px;
  background: #336699;
  border-top: 1px solid #a8b8c8;
  border-bottom: 1px solid #c5d4e2;
}

.coords {
  display: flex;
  gap: 17px;
  color: #dbe6f2;
  font-size: 11px;
  letter-spacing: 0.3px;
}

.badges {
  display: flex;
  gap: 17px;
}

.badge {
  display: flex;
  align-items: center;
  width: 78px;
  height: 13px;
  box-sizing: border-box;
  border: 1px solid #fff;
  font-size: 8px;
  line-height: 11px;
  white-space: nowrap;
  overflow: hidden;
}

.badge--pmapper {
  background: #1f4f87;
  color: #fff;
  font-size: 9px;
  font-style: italic;
  font-weight: bold;
}

.badge--pmapper i {
  flex: none;
  width: 24px;
  height: 11px;
  margin-right: 2px;
  background: radial-gradient(ellipse at center, #2db52d 0 2px, #fff 2.5px 4px, #1f4f87 4.5px);
  box-shadow: 0 0 0 0 #fff;
}

.badge--ms {
  background: #8a8a78;
  color: #fff;
}

.badge--ms i {
  flex: none;
  width: 24px;
  height: 11px;
  margin-right: 2px;
  background: radial-gradient(circle at 50% 50%, #3d7f8c 0 4px, #fff 4.5px);
}

.badge--w3c {
  background: #8a8a78;
  color: #fff;
  letter-spacing: 0.3px;
}

.badge--w3c b {
  flex: none;
  width: 24px;
  margin-right: 3px;
  background: #fff;
  color: #1f4f87;
  text-align: center;
}
</style>
